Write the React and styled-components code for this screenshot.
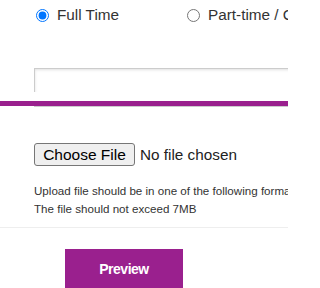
import React from 'react';
import styled, { createGlobalStyle } from 'styled-components';

const GlobalStyle = createGlobalStyle`
  html, body {
    margin: 0;
    padding: 0;
    background: #fff;
    overflow: hidden;
  }
  body {
    font-family: "Liberation Sans", Arial, sans-serif;
    color: #333;
  }
`;

const Page = styled.div`
  position: relative;
  width: 288px;
  height: 288px;
  overflow: hidden;
`;

const Section = styled.div`
  padding: 5px 0 0 34px;
`;

const RadioRow = styled.div`
  display: flex;
  height: 20px;
  align-items: center;
`;

const RadioOption = styled.label`
  display: flex;
  align-items: center;
  flex: 0 0 151px;
  font-size: 15.3px;
  color: #333;
  white-space: nowrap;
  gap: 8px;
`;

const Radio = styled.input`
  width: 13px;
  height: 13px;
  margin: 0 0 0 2px;
  accent-color: #0075ff;
`;

const TextField = styled.input`
  display: block;
  box-sizing: border-box;
  width: 420px;
  height: 39px;
  margin: 43px 0 0;
  border: 1px solid #ccc;
  border-radius: 0;
  box-shadow: inset 0 1px 3px rgba(0, 0, 0, 0.12);
  background: #fff;
  font: 14px "Liberation Sans", Arial, sans-serif;
  outline: none;
`;

const StickyBar = styled.div`
  position: absolute;
  left: 0;
  top: 92px;
  width: 100%;
  height: 9px;
  background: #fff;
  border-bottom: 5px solid #9a208e;
`;

const FileRow = styled.div`
  display: flex;
  align-items: center;
  gap: 5px;
  margin-top: 36px;
`;

const ChooseButton = styled.button`
  box-sizing: border-box;
  width: 101px;
  height: 23px;
  padding: 0;
  border: 1px solid #767676;
  border-radius: 3px;
  background: #efefef;
  color: #000;
  font: 15.5px "Liberation Sans", Arial, sans-serif;
`;

const FileName = styled.span`
  font-size: 15.3px;
  color: #222;
`;

const Help = styled.p`
  margin: 16px 0 0;
  font-size: 11.6px;
  line-height: 18px;
  color: #333;
  white-space: nowrap;
`;

const Divider = styled.hr`
  margin: 9px 0 0;
  border: 0;
  border-top: 1px solid #eee;
`;

const Footer = styled.div`
  padding: 21px 0 0 65px;
`;

const PreviewButton = styled.button`
  width: 118px;
  height: 40px;
  border: 0;
  background: #9a208e;
  color: #fff;
  font: bold 14px "Liberation Sans", Arial, sans-serif;
  letter-spacing: -0.5px;
`;

export default function App() {
  return (
    <Page>
      <GlobalStyle />
      <Section>
        <RadioRow>
          <RadioOption>
            <Radio type="radio" name="jobType" defaultChecked />
            Full Time
          </RadioOption>
          <RadioOption>
            <Radio type="radio" name="jobType" />
            Part-time / Contract
          </RadioOption>
        </RadioRow>
        <TextField type="text" />
        <FileRow>
          <ChooseButton type="button">Choose File</ChooseButton>
          <FileName>No file chosen</FileName>
        </FileRow>
        <Help>
          Upload file should be in one of the following formats: .doc, .docx, .pdf
          <br />
          The file should not exceed 7MB
        </Help>
      </Section>
      <Divider />
      <Footer>
        <PreviewButton type="button">Preview</PreviewButton>
      </Footer>
      <StickyBar />
    </Page>
  );
}
